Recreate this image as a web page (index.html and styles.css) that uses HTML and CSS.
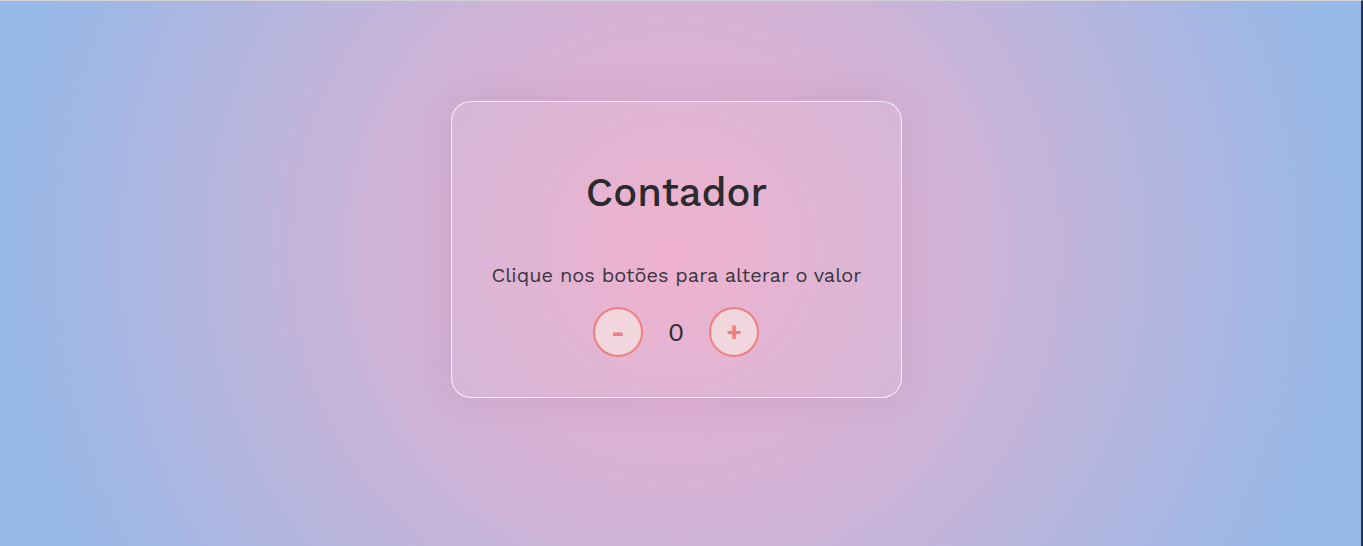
FILE: index.html
```html
<!DOCTYPE html>
<html lang="pt-BR">
<head>
<meta charset="utf-8">
<title>Contador</title>
<link rel="stylesheet" href="styles.css">
</head>
<body>
<main class="page">
  <section class="card">
    <h1 class="title">Contador</h1>
    <p class="hint">Clique nos botões para alterar o valor</p>
    <div class="controls">
      <button class="btn" type="button">-</button>
      <span class="value">0</span>
      <button class="btn" type="button">+</button>
    </div>
  </section>
</main>
</body>
</html>
```

FILE: styles.css
```css
html, body {
  margin: 0;
  padding: 0;
  height: 100%;
}

body {
  font-family: "Work Sans", "Inter", "Noto Sans", sans-serif;
  background: radial-gradient(circle farthest-side at 49.6% 46%, #efaecd 0%, #d2b3d6 40%, #95b9e8 100%);
  color: #2d2d2d;
  overflow: hidden;
}

.page {
  box-sizing: border-box;
  height: 100%;
  display: flex;
  justify-content: center;
  align-items: flex-start;
  padding-top: 100px;
  padding-right: 8px;
  border-top: 1px solid #d2d2d6;
  border-right: 2px solid #2b3550;
}

.card {
  box-sizing: border-box;
  width: 451px;
  height: 297px;
  border: 1px solid rgba(255, 255, 255, 0.75);
  border-radius: 20px;
  background: rgba(255, 255, 255, 0.06);
  box-shadow: 0 0 40px rgba(90, 60, 100, 0.12);
  display: flex;
  flex-direction: column;
  align-items: center;
  padding-top: 67px;
}

.title {
  margin: 0;
  font-size: 40px;
  font-weight: 500;
  line-height: 48px;
  color: #2b2b2d;
}

.hint {
  margin: 46px 0 0;
  font-size: 20px;
  font-weight: 400;
  line-height: 24px;
  color: #3a3540;
}

.controls {
  margin-top: 20px;
  display: flex;
  align-items: center;
  gap: 25px;
  padding-right: 1px;
}

.btn {
  box-sizing: border-box;
  width: 50px;
  height: 50px;
  border-radius: 50%;
  border: 2px solid #ef7f7f;
  background: rgba(245, 225, 225, 0.75);
  color: #ef7f7f;
  font-family: inherit;
  font-size: 26px;
  font-weight: 700;
  line-height: 1;
  padding: 0;
  display: flex;
  align-items: center;
  justify-content: center;
}

.value {
  font-size: 26px;
  font-weight: 400;
  line-height: 32px;
  color: #2d2d2d;
  text-align: center;
}
```
